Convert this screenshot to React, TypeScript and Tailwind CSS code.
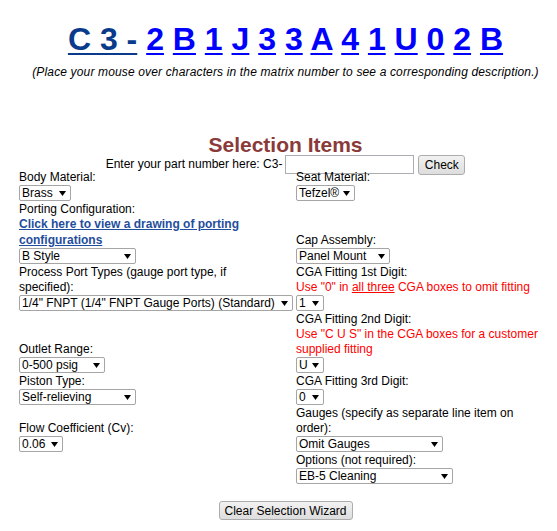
import React from "react";

function Sel({ label, w }: { label: string; w: string }) {
  return (
    <div
      className={`${w} h-[16px] border border-[#a5a5a5] rounded-[2px] bg-white flex items-center justify-between pl-[2px] pr-[4px] leading-[14px]`}
    >
      <span className="whitespace-nowrap">{label}</span>
      <svg width="7" height="5" viewBox="0 0 7 5" className="shrink-0">
        <path d="M0 0H7L3.5 5Z" fill="#000" />
      </svg>
    </div>
  );
}

function Line({ children }: { children: React.ReactNode }) {
  return <div className="leading-[15px] whitespace-nowrap">{children}</div>;
}

function Red({ children }: { children: React.ReactNode }) {
  return <div className="leading-[15px] whitespace-nowrap text-[#ff0000]">{children}</div>;
}

function Cell({ children }: { children?: React.ReactNode }) {
  return <div className="flex flex-col items-start pb-[1px]">{children}</div>;
}

export default function App() {
  const chars = ["2", "B", "1", "J", "3", "3", "A", "4", "1", "U", "0", "2", "B"];
  return (
    <div className="w-[557px] h-[531px] bg-white overflow-hidden font-['Liberation_Sans',Arial,sans-serif] text-[12px] text-black pl-[14px]">
      <div className="pt-[21px] text-center text-[32px] font-bold leading-[37px] whitespace-nowrap">
        <span className="text-[#0a3a8c] underline decoration-[2px] underline-offset-[3px]">C 3 -</span>{" "}
        {chars.map((c, i) => (
          <React.Fragment key={i}>
            <span className="text-[#0000ff] underline decoration-[2px] underline-offset-[3px]">{c}</span>
            {i < chars.length - 1 ? " " : ""}
          </React.Fragment>
        ))}
      </div>
      <div className="mt-[7px] text-center italic leading-[15px] tracking-[0.15px] whitespace-nowrap">
        (Place your mouse over characters in the matrix number to see a corresponding description.)
      </div>
      <div className="mt-[55px] text-center text-[21px] font-bold leading-[20px] text-[#8b3a3a]">
        Selection Items
      </div>
      <div className="mt-[2px] h-[15px] flex justify-center items-center">
        <span className="leading-[15px] whitespace-nowrap">Enter your part number here: C3-</span>
        <input
          type="text"
          className="ml-[3px] w-[129px] h-[19px] border border-[#abadb3] bg-white outline-none"
        />
        <button className="ml-[4px] w-[47px] h-[20px] border border-[#acacac] rounded-[3px] bg-linear-to-b from-[#f2f2f2] to-[#dddddd] text-[12px] leading-[14px] text-black">
          Check
        </button>
      </div>

      <div className="-mt-[2px] ml-[5px] grid grid-cols-[277px_1fr] items-end">
        <Cell>
          <Line>Body Material:</Line>
          <Sel label="Brass" w="w-[52px]" />
        </Cell>
        <Cell>
          <Line>Seat Material:</Line>
          <Sel label="Tefzel®" w="w-[59px]" />
        </Cell>

        <Cell>
          <Line>Porting Configuration:</Line>
          <div className="leading-[15px] font-bold text-[#1f4e9c] underline whitespace-nowrap">
            Click here to view a drawing of porting
          </div>
          <div className="leading-[16px] font-bold text-[#1f4e9c] underline whitespace-nowrap">
            configurations
          </div>
          <Sel label="B Style" w="w-[117px]" />
        </Cell>
        <Cell>
          <Line>Cap Assembly:</Line>
          <Sel label="Panel Mount" w="w-[94px]" />
        </Cell>

        <Cell>
          <Line>Process Port Types (gauge port type, if</Line>
          <Line>specified):</Line>
          <Sel label={'1/4" FNPT (1/4" FNPT Gauge Ports) (Standard)'} w="w-[274px]" />
        </Cell>
        <Cell>
          <Line>CGA Fitting 1st Digit:</Line>
          <Red>
            Use "0" in <span className="underline">all three</span> CGA boxes to omit fitting
          </Red>
          <Sel label="1" w="w-[28px]" />
        </Cell>

        <Cell>
          <Line>Outlet Range:</Line>
          <Sel label="0-500 psig" w="w-[86px]" />
        </Cell>
        <Cell>
          <Line>CGA Fitting 2nd Digit:</Line>
          <Red>Use "C U S" in the CGA boxes for a customer</Red>
          <Red>supplied fitting</Red>
          <Sel label="U" w="w-[28px]" />
        </Cell>

        <Cell>
          <Line>Piston Type:</Line>
          <Sel label="Self-relieving" w="w-[117px]" />
        </Cell>
        <Cell>
          <Line>CGA Fitting 3rd Digit:</Line>
          <Sel label="0" w="w-[28px]" />
        </Cell>

        <Cell>
          <Line>Flow Coefficient (Cv):</Line>
          <Sel label="0.06" w="w-[44px]" />
        </Cell>
        <Cell>
          <Line>Gauges (specify as separate line item on</Line>
          <Line>order):</Line>
          <Sel label="Omit Gauges" w="w-[147px]" />
        </Cell>

        <Cell />
        <Cell>
          <Line>Options (not required):</Line>
          <Sel label="EB-5 Cleaning" w="w-[157px]" />
        </Cell>
      </div>

      <div className="mt-[16px] flex justify-center">
        <button className="w-[134px] h-[19px] border border-[#acacac] rounded-[3px] bg-linear-to-b from-[#f2f2f2] to-[#dddddd] text-[12px] leading-[14px] text-black whitespace-nowrap">
          Clear Selection Wizard
        </button>
      </div>
    </div>
  );
}
